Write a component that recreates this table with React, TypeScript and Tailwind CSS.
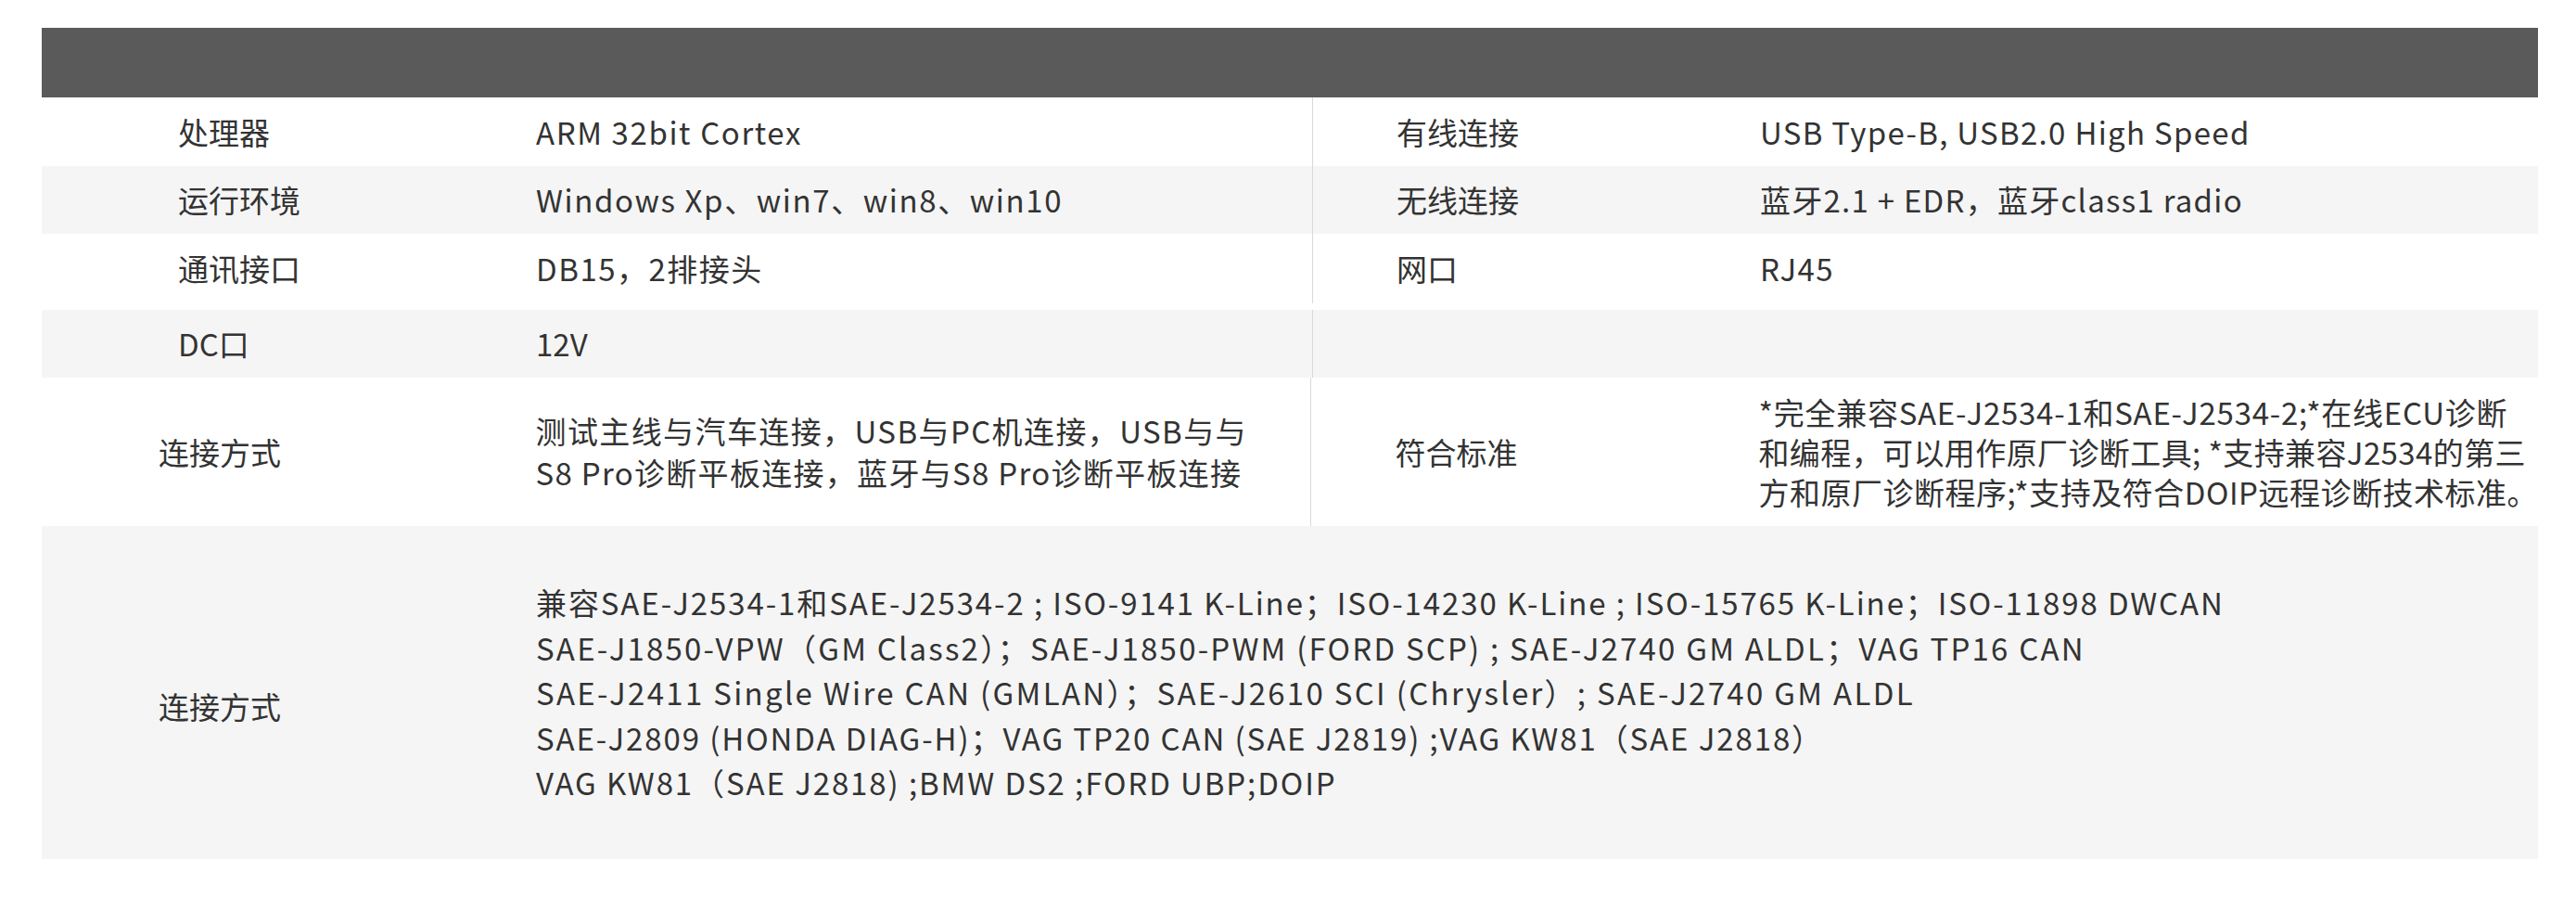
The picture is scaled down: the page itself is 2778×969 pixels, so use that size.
import React from "react";

type Row = {
  label: string;
  value: React.ReactNode;
  rLabel?: string;
  rValue?: React.ReactNode;
  h: string;
  gray: boolean;
};

const rows: Row[] = [
  {
    label: "处理器",
    value: <span className="tracking-[1.6px]">ARM 32bit Cortex</span>,
    rLabel: "有线连接",
    rValue: <span className="tracking-[1.3px]">USB Type-B, USB2.0 High Speed</span>,
    h: "h-[74px]",
    gray: false,
  },
  {
    label: "运行环境",
    value: <span className="tracking-[1.6px]">Windows Xp、win7、win8、win10</span>,
    rLabel: "无线连接",
    rValue: <span className="tracking-[1.25px]">蓝牙2.1 + EDR，蓝牙class1 radio</span>,
    h: "h-[73px]",
    gray: true,
  },
  {
    label: "通讯接口",
    value: <span className="tracking-[1.5px]">DB15，2排接头</span>,
    rLabel: "网口",
    rValue: <span className="tracking-[1.3px]">RJ45</span>,
    h: "h-[82px] pb-[7px]",
    gray: false,
  },
  { label: "DC口", value: "12V", rLabel: "", rValue: "", h: "h-[73px]", gray: true },
];

export default function App() {
  return (
    <div className="min-h-[969px] bg-white pt-[30px] font-['Noto_Sans_CJK_SC','Noto_Sans',sans-serif] text-[33px] text-[#333333]">
      <div className="ml-[45px] w-[2692px]">
        <div className="h-[75px] bg-[#5a5a5a]" />
        {rows.map((r, i) => (
          <div key={i} className={`flex ${r.h} ${r.gray ? "bg-[#f5f5f5]" : "bg-white"}`}>
            <div className="flex w-[533px] items-center whitespace-nowrap pl-[147px] leading-none">{r.label}</div>
            <div className="flex w-[837px] items-center whitespace-nowrap leading-none">{r.value}</div>
            <div className="flex flex-1 border-l border-[#d9d9d9]">
              <div className="flex w-[482px] items-center whitespace-nowrap pl-[90px] leading-none">{r.rLabel}</div>
              <div className="flex flex-1 items-center whitespace-nowrap leading-none">{r.rValue}</div>
            </div>
          </div>
        ))}
        <div className="flex h-[160px] bg-white">
          <div className="flex w-[533px] items-center pl-[126px] leading-none">连接方式</div>
          <div className="flex w-[837px] items-center whitespace-nowrap leading-[45px]">
            <p>
              <span className="block tracking-[1.4px]">测试主线与汽车连接，USB与PC机连接，USB与与</span>
              <span className="block tracking-[1.3px]">S8 Pro诊断平板连接，蓝牙与S8 Pro诊断平板连接</span>
            </p>
          </div>
          <div className="flex flex-1 border-l border-[#d9d9d9]">
            <div className="flex w-[482px] items-center pl-[90px] leading-none">符合标准</div>
            <div className="flex flex-1 items-center whitespace-nowrap pt-[1px] leading-[43px]">
              <p>
                <span className="block tracking-[0.75px]">*完全兼容SAE-J2534-1和SAE-J2534-2;*在线ECU诊断</span>
                <span className="block tracking-[0.4px]">和编程，可以用作原厂诊断工具; *支持兼容J2534的第三</span>
                <span className="block tracking-[0.5px]">方和原厂诊断程序;*支持及符合DOIP远程诊断技术标准。</span>
              </p>
            </div>
          </div>
        </div>
        <div className="flex h-[359px] bg-[#f5f5f5]">
          <div className="flex w-[533px] items-center pl-[126px] pt-[30px] leading-none">连接方式</div>
          <div className="flex flex-1 items-center whitespace-nowrap leading-[48.5px]">
            <p>
              <span className="block tracking-[1.9px]">
                兼容SAE-J2534-1和SAE-J2534-2 ; ISO-9141 K-Line；ISO-14230 K-Line ; ISO-15765 K-Line；ISO-11898 DWCAN
              </span>
              <span className="block tracking-[2.2px]">
                SAE-J1850-VPW（GM Class2）；SAE-J1850-PWM (FORD SCP) ; SAE-J2740 GM ALDL；VAG TP16 CAN
              </span>
              <span className="block tracking-[2.3px]">
                SAE-J2411 Single Wire CAN (GMLAN）；SAE-J2610 SCI (Chrysler）; SAE-J2740 GM ALDL
              </span>
              <span className="block tracking-[1.9px]">
                SAE-J2809 (HONDA DIAG-H)；VAG TP20 CAN (SAE J2819) ;VAG KW81（SAE J2818）
              </span>
              <span className="block tracking-[1.9px]">VAG KW81（SAE J2818) ;BMW DS2 ;FORD UBP;DOIP</span>
            </p>
          </div>
        </div>
      </div>
    </div>
  );
}
